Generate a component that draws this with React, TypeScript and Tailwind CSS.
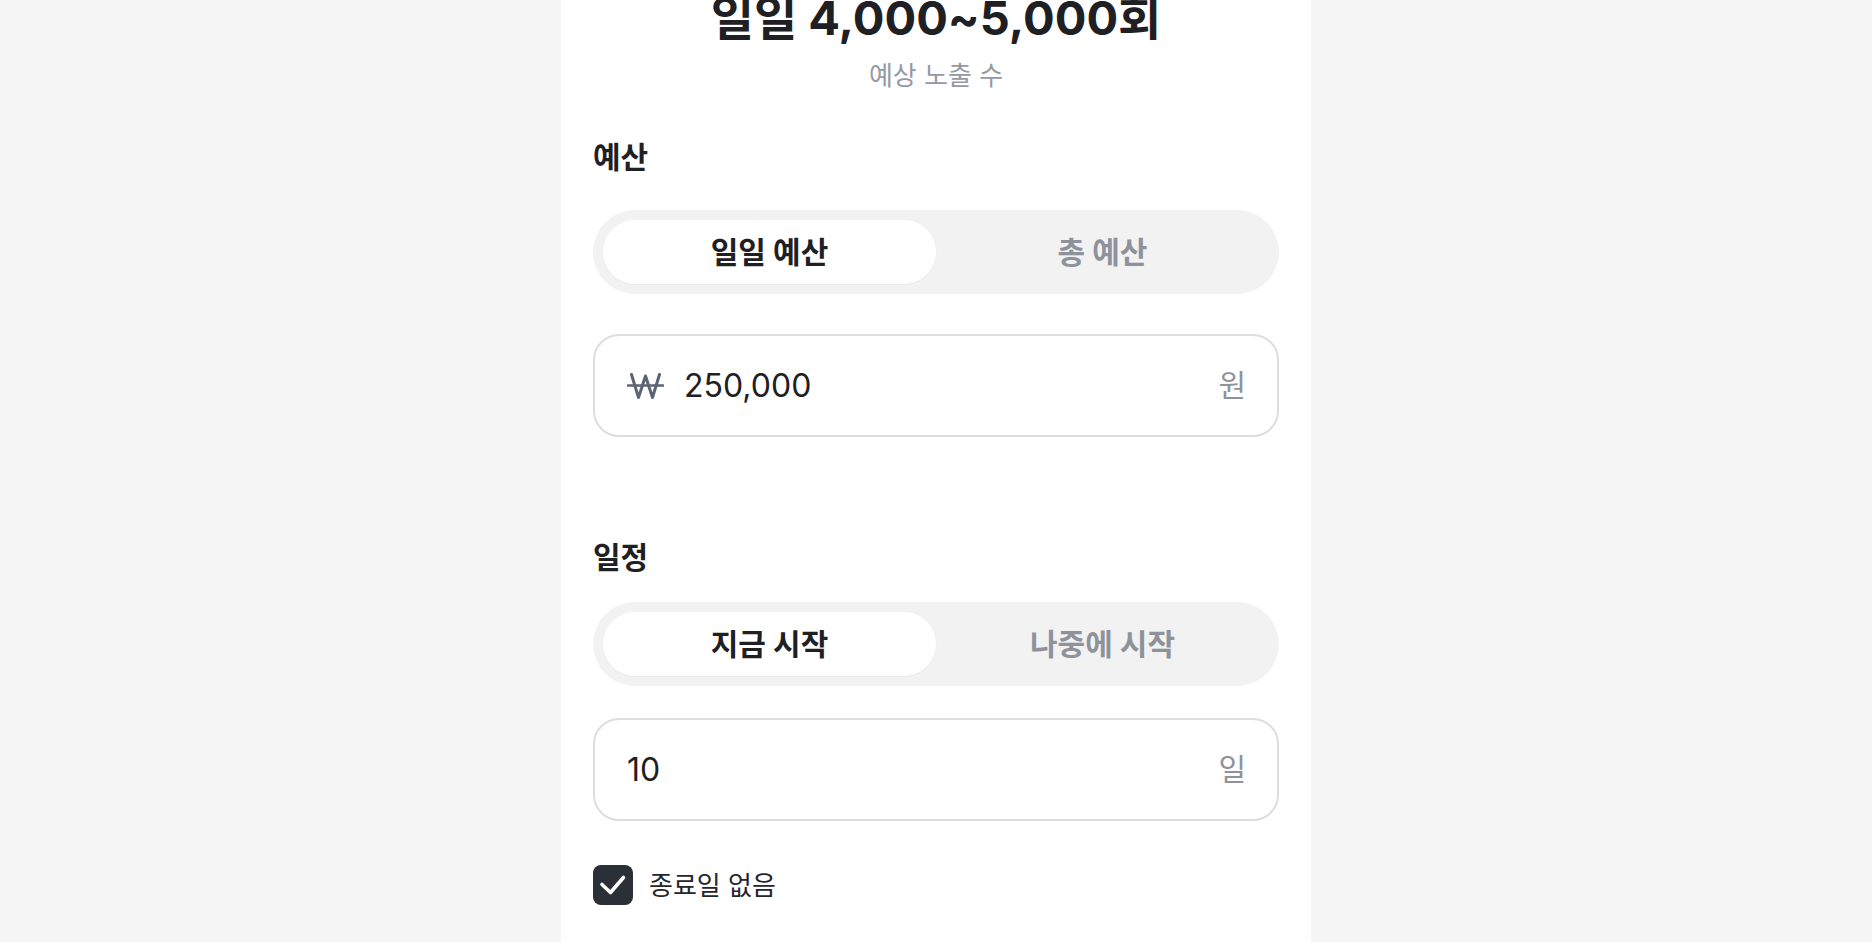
import { useState } from "react";

const font = "font-['Inter','Noto_Sans_CJK_KR',sans-serif]";

function WonIcon() {
  return (
    <svg width="37" height="26" viewBox="0 0 37 26" fill="none" className="shrink-0">
      <path
        d="M4.5 1.5 L11.5 24.5 L18.5 3 L25.5 24.5 L32.5 1.5"
        stroke="#5b6473"
        strokeWidth="3"
        strokeLinecap="round"
        strokeLinejoin="round"
      />
      <path d="M1 12.5 H36" stroke="#5b6473" strokeWidth="2.6" strokeLinecap="round" />
    </svg>
  );
}

function Segmented({
  options,
  value,
  onChange,
}: {
  options: string[];
  value: number;
  onChange: (i: number) => void;
}) {
  return (
    <div className="flex h-[84px] rounded-full bg-[#f2f2f3] p-[10px]">
      {options.map((label, i) => (
        <button
          key={label}
          type="button"
          onClick={() => onChange(i)}
          className={`flex flex-1 items-center justify-center rounded-full text-[30px] font-bold ${
            value === i
              ? "bg-white text-[#1f2023] shadow-[0_1px_2px_rgba(0,0,0,0.04)]"
              : "text-[#8e929b]"
          }`}
        >
          {label}
        </button>
      ))}
    </div>
  );
}

function Field({ value, suffix, icon }: { value: string; suffix: string; icon?: boolean }) {
  return (
    <div className="flex h-[103px] items-center rounded-[26px] border-2 border-[#dcdce1] bg-white pl-8 pr-[31px]">
      {icon && (
        <div className="mr-[20px]">
          <WonIcon />
        </div>
      )}
      <span className="flex-1 text-[32px] text-[#1f2023]">{value}</span>
      <span className="text-[30px] text-[#8e929b]">{suffix}</span>
    </div>
  );
}

export default function App() {
  const [budget, setBudget] = useState(0);
  const [schedule, setSchedule] = useState(0);
  const [noEnd, setNoEnd] = useState(true);

  return (
    <div className={`h-[942px] overflow-hidden bg-[#f5f5f5] ${font}`}>
      <div className="mx-auto flex h-full w-[750px] flex-col overflow-hidden bg-white px-8">
        <div className="text-center">
          <h1 className="-mt-[8px] text-[47px] font-bold leading-[52px] text-[#1f2023]">
            일일 4,000~5,000회
          </h1>
          <p className="mt-[16px] text-[26px] leading-[32px] text-[#9599a2]">예상 노출 수</p>
        </div>

        <h2 className="mt-[47px] text-[30px] font-bold leading-[36px] text-[#1f2023]">예산</h2>
        <div className="mt-[35px]">
          <Segmented options={["일일 예산", "총 예산"]} value={budget} onChange={setBudget} />
        </div>
        <div className="mt-[40px]">
          <Field value="250,000" suffix="원" icon />
        </div>

        <h2 className="mt-[102px] text-[30px] font-bold leading-[36px] text-[#1f2023]">일정</h2>
        <div className="mt-[27px]">
          <Segmented options={["지금 시작", "나중에 시작"]} value={schedule} onChange={setSchedule} />
        </div>
        <div className="mt-[32px]">
          <Field value="10" suffix="일" />
        </div>

        <label className="mt-[44px] flex cursor-pointer items-center gap-4">
          <button
            type="button"
            onClick={() => setNoEnd(!noEnd)}
            className={`flex h-10 w-10 shrink-0 items-center justify-center rounded-[8px] ${
              noEnd ? "bg-[#2b2f38]" : "border-2 border-[#dcdce1] bg-white"
            }`}
          >
            {noEnd && (
              <svg width="40" height="40" viewBox="0 0 40 40" fill="none">
                <path
                  d="M9 19.5 L17.5 27.5 L30.5 12.5"
                  stroke="white"
                  strokeWidth="3.6"
                  strokeLinecap="round"
                  strokeLinejoin="round"
                />
              </svg>
            )}
          </button>
          <span className="text-[26px] text-[#25262b]">종료일 없음</span>
        </label>
      </div>
    </div>
  );
}
